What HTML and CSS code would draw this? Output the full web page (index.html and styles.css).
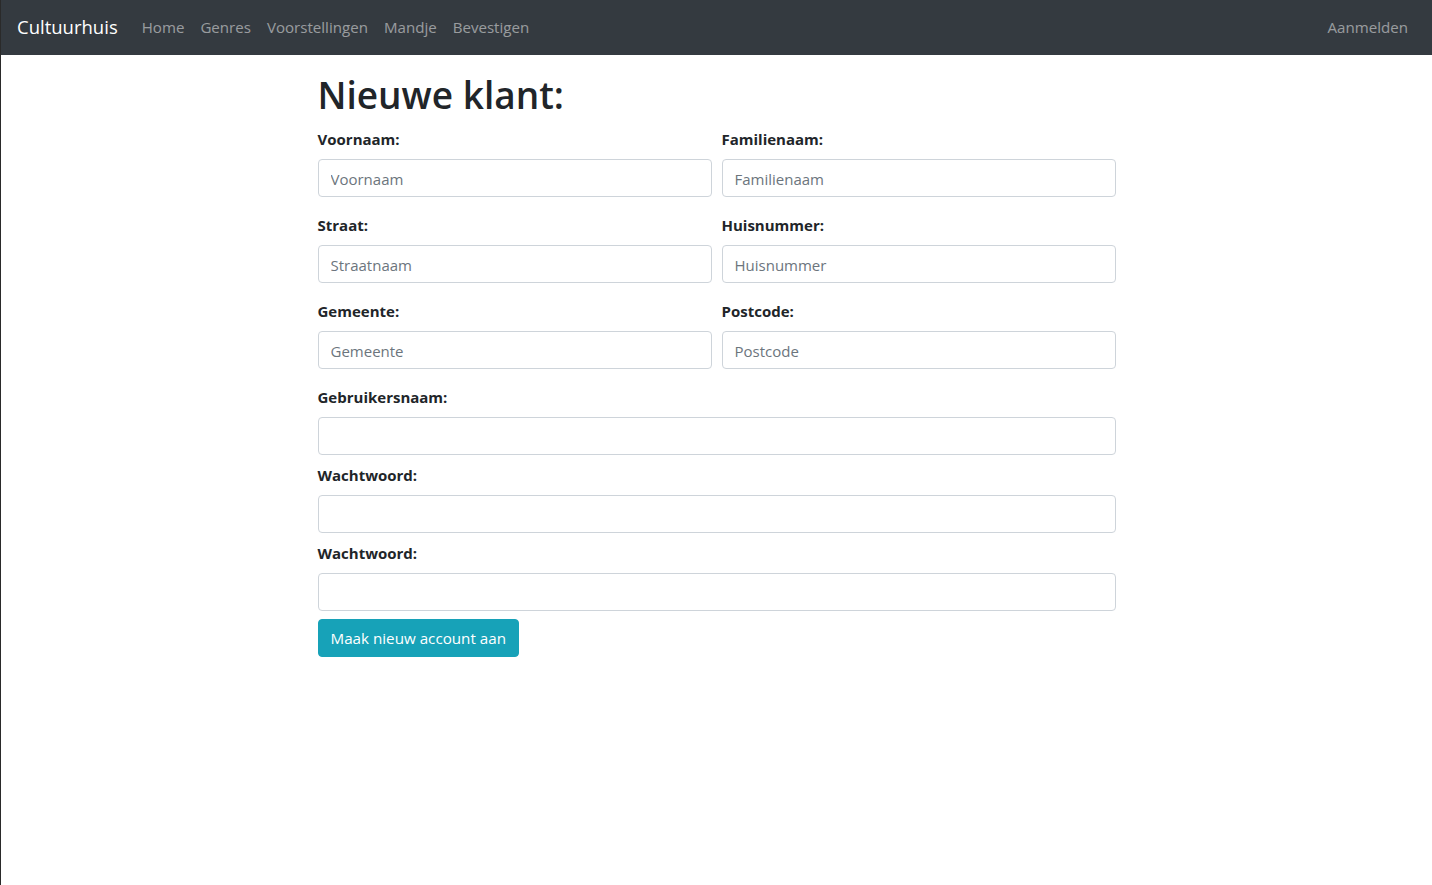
FILE: index.html
```html
<!DOCTYPE html>
<html lang="nl">
<head>
<meta charset="utf-8">
<title>Cultuurhuis - Nieuwe klant</title>
<link rel="stylesheet" href="styles.css">
</head>
<body>
<div class="page">
  <nav class="navbar">
    <a class="brand" href="#">Cultuurhuis</a>
    <ul class="nav">
      <li><a href="#">Home</a></li>
      <li><a href="#">Genres</a></li>
      <li><a href="#">Voorstellingen</a></li>
      <li><a href="#">Mandje</a></li>
      <li><a href="#">Bevestigen</a></li>
    </ul>
    <ul class="nav nav-right">
      <li><a href="#">Aanmelden</a></li>
    </ul>
  </nav>
  <main class="container">
    <h1 class="title">Nieuwe klant:</h1>
    <form class="form">
      <div class="row">
        <div class="group">
          <label class="label">Voornaam:</label>
          <input class="input" type="text" placeholder="Voornaam">
        </div>
        <div class="group">
          <label class="label">Familienaam:</label>
          <input class="input" type="text" placeholder="Familienaam">
        </div>
      </div>
      <div class="row">
        <div class="group">
          <label class="label">Straat:</label>
          <input class="input" type="text" placeholder="Straatnaam">
        </div>
        <div class="group">
          <label class="label">Huisnummer:</label>
          <input class="input" type="text" placeholder="Huisnummer">
        </div>
      </div>
      <div class="row">
        <div class="group">
          <label class="label">Gemeente:</label>
          <input class="input" type="text" placeholder="Gemeente">
        </div>
        <div class="group">
          <label class="label">Postcode:</label>
          <input class="input" type="text" placeholder="Postcode">
        </div>
      </div>
      <div class="single">
        <label class="label">Gebruikersnaam:</label>
        <input class="input" type="text">
      </div>
      <div class="single">
        <label class="label">Wachtwoord:</label>
        <input class="input" type="password">
      </div>
      <div class="single">
        <label class="label">Wachtwoord:</label>
        <input class="input" type="password">
      </div>
      <button class="btn" type="button">Maak nieuw account aan</button>
    </form>
  </main>
</div>
</body>
</html>
```

FILE: styles.css
```css
* { box-sizing: border-box; }
html, body { margin: 0; padding: 0; }
body {
  font-family: "Open Sans", "Noto Sans", sans-serif;
  font-size: 16px;
  color: #212529;
  background: #fff;
}
.page {
  border-left: 1px solid #2a2a2a;
  min-height: 885px;
}
.navbar {
  display: flex;
  align-items: center;
  height: 55px;
  background: #343a40;
  padding: 0 16px;
}
.brand {
  color: #fff;
  font-size: 18.5px;
  text-decoration: none;
  margin-right: 16px;
  line-height: 30px;
  padding-bottom: 2px;
}
.nav {
  display: flex;
  list-style: none;
  margin: 0;
  padding: 0;
}
.nav a {
  display: block;
  padding: 0 8px 2px;
  color: rgba(255,255,255,0.5);
  text-decoration: none;
  font-size: 15.1px;
  line-height: 40px;
}
.nav-right { margin-left: auto; }
.container {
  width: 798px;
  margin: 0 auto;
  padding-top: 16px;
}
.title {
  font-size: 37px;
  font-weight: 600;
  line-height: 48px;
  margin: 0 0 8px;
}
.row {
  display: flex;
  gap: 10px;
  margin-bottom: 16px;
}
.group { flex: 1; }
.single { margin-bottom: 8px; }
.label {
  display: block;
  font-weight: 700;
  font-size: 15px;
  line-height: 24px;
  margin-bottom: 8px;
}
.input {
  display: block;
  width: 100%;
  height: 38px;
  padding: 6px 12px 4px;
  font-family: inherit;
  font-size: 15px;
  color: #495057;
  border: 1px solid #ced4da;
  border-radius: 4px;
  background: #fff;
}
.input::placeholder { color: #6c757d; }
.btn {
  display: inline-block;
  height: 38px;
  padding: 0 12px;
  font-family: inherit;
  font-size: 15.2px;
  color: #fff;
  background: #17a2b8;
  border: 1px solid #17a2b8;
  border-radius: 4px;
}
```
